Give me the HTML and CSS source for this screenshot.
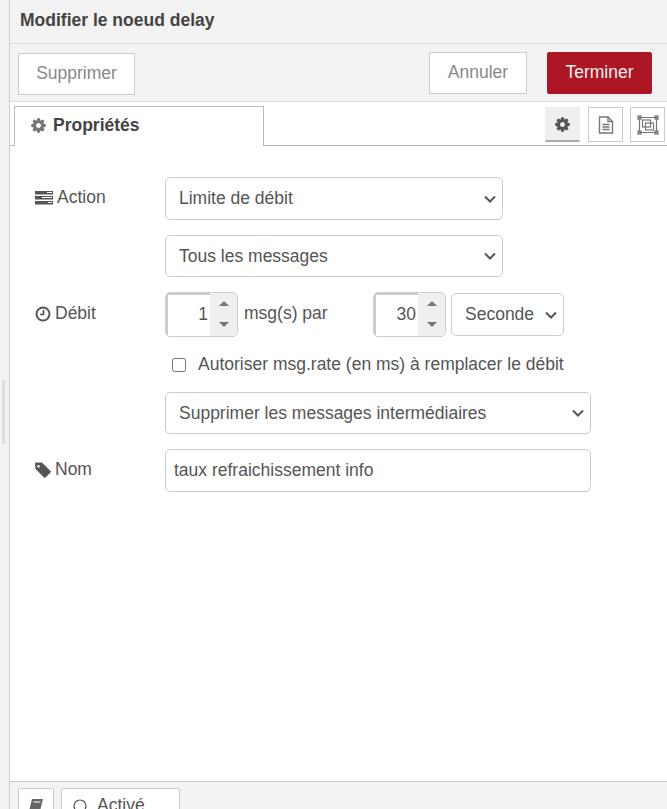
FILE: index.html
```html
<!DOCTYPE html>
<html lang="fr">
<head>
    <meta charset="UTF-8">
    <title>Modifier le noeud delay</title>
    <link rel="stylesheet" href="styles.css">
</head>
<body>

<div class="side-strip"><div class="grip"></div></div>

<div class="tray">
    <div class="tray-title">Modifier le noeud delay</div>

    <div class="tray-actions">
        <button class="btn btn-delete">Supprimer</button>
        <div class="spacer"></div>
        <button class="btn btn-cancel">Annuler</button>
        <button class="btn btn-done">Terminer</button>
    </div>

    <div class="tab-bar">
        <div class="tab">
            <svg class="icon-cog" viewBox="0 0 1792 1792"><path d="M1152 896q0-106-75-181t-181-75-181 75-75 181 75 181 181 75 181-75 75-181zm512-109v222q0 12-8 23t-20 13l-185 28q-19 54-39 91 35 50 107 138 10 12 10 25t-9 23q-27 37-99 108t-94 71q-12 0-26-9l-138-108q-44 23-91 38-16 136-29 186-7 28-36 28h-222q-14 0-24.5-8.5t-11.5-21.5l-28-184q-49-16-90-37l-141 107q-10 9-25 9-14 0-25-11-126-114-165-168-7-10-7-23 0-12 8-23 15-21 51-66.5t54-70.5q-27-50-41-99l-183-27q-13-2-21-12.5t-8-23.5v-222q0-12 8-23t19-13l186-28q14-46 39-92-40-57-107-138-10-12-10-24 0-10 9-23 26-36 98.5-107.5t94.5-71.5q13 0 26 10l138 107q44-23 91-38 16-136 29-186 7-28 36-28h222q14 0 24.5 8.5t11.5 21.5l28 184q49 16 90 37l142-107q9-9 24-9 13 0 25 10 129 119 165 170 7 8 7 22 0 12-8 23-15 21-51 66.5t-54 70.5q26 50 41 98l183 28q13 2 21 12.5t8 23.5z"/></svg>
            Propriétés
        </div>
        <div class="tab-buttons">
            <div class="tab-btn active">
                <svg class="icon-cog dark" viewBox="0 0 1792 1792"><path d="M1152 896q0-106-75-181t-181-75-181 75-75 181 75 181 181 75 181-75 75-181zm512-109v222q0 12-8 23t-20 13l-185 28q-19 54-39 91 35 50 107 138 10 12 10 25t-9 23q-27 37-99 108t-94 71q-12 0-26-9l-138-108q-44 23-91 38-16 136-29 186-7 28-36 28h-222q-14 0-24.5-8.5t-11.5-21.5l-28-184q-49-16-90-37l-141 107q-10 9-25 9-14 0-25-11-126-114-165-168-7-10-7-23 0-12 8-23 15-21 51-66.5t54-70.5q-27-50-41-99l-183-27q-13-2-21-12.5t-8-23.5v-222q0-12 8-23t19-13l186-28q14-46 39-92-40-57-107-138-10-12-10-24 0-10 9-23 26-36 98.5-107.5t94.5-71.5q13 0 26 10l138 107q44-23 91-38 16-136 29-186 7-28 36-28h222q14 0 24.5 8.5t11.5 21.5l28 184q49 16 90 37l142-107q9-9 24-9 13 0 25 10 129 119 165 170 7 8 7 22 0 12-8 23-15 21-51 66.5t-54 70.5q26 50 41 98l183 28q13 2 21 12.5t8 23.5z"/></svg>
            </div>
            <div class="tab-btn">
                <svg width="16" height="18" viewBox="0 0 16 18" fill="none" stroke="#777" stroke-width="1.4"><path d="M1.5 1h8.5l4.500 4.500v11.500h-13z"/><path d="M10 1v4.500h4.500"/><path d="M4.500 8.500h7M4.500 11h7M4.500 13.500h7"/></svg>
            </div>
            <div class="tab-btn">
                <svg width="22" height="20" viewBox="0 0 22 20" fill="none" stroke="#777" stroke-width="1.2"><path d="M3 2.500h16M3 17.500h16M2.500 3v14M19.500 3v14"/><rect x="5.500" y="5" width="8" height="7"/><rect x="8.500" y="8" width="8" height="7"/><rect x="1" y="1" width="3" height="3" fill="#999"/><rect x="18" y="1" width="3" height="3" fill="#999"/><rect x="1" y="16" width="3" height="3" fill="#999"/><rect x="18" y="16" width="3" height="3" fill="#999"/></svg>
            </div>
        </div>
    </div>

    <div class="form">
        <div class="form-row row-action">
            <label class="form-label">
                <svg width="18" height="14" viewBox="0 0 18 14"><path fill="#555" d="M0 0h18v3.600h-18zM0 5h18v3.600h-18zM0 10h18v3.600h-18z"/><path fill="#fff" d="M12 1h5v1h-5zM7 6h10v1h-10zM13 11h4v1h-4z"/></svg>
                Action
            </label>
            <select class="field field-wide"><option>Limite de débit</option></select>
        </div>
        <div class="form-row row-mode">
            <div class="form-label"></div>
            <select class="field field-wide field-short"><option>Tous les messages</option></select>
        </div>
        <div class="form-row row-rate">
            <label class="form-label">
                <svg width="16" height="16" viewBox="0 0 16 16" fill="none" stroke="#555"><circle cx="8" cy="8" r="6.500" stroke-width="2"/><path d="M8.500 4v4.500h-3.500" stroke-width="1.700"/></svg>
                Débit
            </label>
            <div class="spinner">
                <input class="spinner-input" type="text" value="1">
                <div class="spinner-arrows"><span class="arrow-up"></span><span class="arrow-down"></span></div>
            </div>
            <span class="rate-text">msg(s) par</span>
            <div class="spinner">
                <input class="spinner-input" type="text" value="30">
                <div class="spinner-arrows"><span class="arrow-up"></span><span class="arrow-down"></span></div>
            </div>
            <select class="field field-unit"><option>Seconde</option></select>
        </div>
        <div class="form-row row-check">
            <div class="form-label"></div>
            <input class="check" type="checkbox">
            <span>Autoriser msg.rate (en ms) à remplacer le débit</span>
        </div>
        <div class="form-row row-drop">
            <div class="form-label"></div>
            <select class="field field-long"><option>Supprimer les messages intermédiaires</option></select>
        </div>
        <div class="form-row row-name">
            <label class="form-label">
                <svg width="16" height="16" viewBox="0 0 16 16"><path fill="#555" d="M0 1.500q0-1 1-1h6l8.500 8.500q.7.700 0 1.400l-5 5q-.7.700-1.400 0l-8.600-8.500zM3.500 3a1.300 1.300 0 1 0 .01 0z" fill-rule="evenodd"/></svg>
                Nom
            </label>
            <input class="field field-long field-text" type="text" value="taux refraichissement info">
        </div>
    </div>

    <div class="tray-footer">
        <div class="foot-btn foot-book">
            <svg width="16" height="16" viewBox="0 0 16 16"><path fill="#666" d="M4 1h11l-3 12h-11zM5.500 3.500l-.3 1h7l.3-1z" fill-rule="evenodd"/></svg>
        </div>
        <div class="foot-btn foot-state">
            <svg width="14" height="14" viewBox="0 0 14 14" fill="none" stroke="#555" stroke-width="1.200"><circle cx="7" cy="7" r="6"/></svg>
            Activé
        </div>
    </div>
</div>

</body>
</html>
```

FILE: styles.css
```css
* {
    box-sizing: border-box;
}

body {
    margin: 0;
    height: 809px;
    overflow: hidden;
    display: flex;
    font-family: "Liberation Sans", Arial, sans-serif;
    font-size: 17.5px;
    color: #555;
    background: #fff;
}

.side-strip {
    width: 10px;
    flex: none;
    background: #f3f3f3;
    border-right: 1px solid #ccc;
    padding: 380px 4px 0 2px;
}

.grip {
    height: 64px;
    background: #ddd;
}

.tray {
    flex: 1;
    min-width: 0;
    display: flex;
    flex-direction: column;
}

.tray-title {
    height: 44px;
    padding: 10px 0 0 10px;
    background: #f3f3f3;
    border-bottom: 1px solid #ddd;
    font-weight: bold;
    color: #444;
}

.tray-actions {
    height: 58px;
    display: flex;
    align-items: flex-start;
    padding: 8px 15px 0 8px;
    background: #f3f3f3;
    border-bottom: 1px solid #ddd;
}

.spacer {
    flex: 1;
}

.btn {
    height: 42px;
    font: inherit;
    border: 1px solid #ccc;
    background: #fff;
    color: #888;
    padding: 0 0 2px;
}

.btn-delete {
    width: 117px;
    margin-top: 1px;
}

.btn-cancel {
    width: 98px;
}

.btn-done {
    width: 105px;
    margin-left: 20px;
    background: #ad1625;
    border-color: #ad1625;
    border-radius: 2px;
    color: #eee;
}

.tab-bar {
    height: 44px;
    display: flex;
    justify-content: space-between;
    padding-left: 4px;
    border-bottom: 1px solid #bbb;
}

.tab {
    width: 250px;
    height: 40px;
    margin-top: 4px;
    padding: 8px 0 0 15px;
    background: #fff;
    border: 1px solid #bbb;
    border-bottom: none;
    font-weight: bold;
    color: #444;
    display: flex;
    align-items: flex-start;
    gap: 6px;
}

.icon-cog {
    width: 17px;
    height: 17px;
    margin-top: 2px;
    fill: #777;
}

.icon-cog.dark {
    margin-top: 0;
    fill: #555;
}

.tab-buttons {
    display: flex;
    gap: 7px;
    padding: 5px 2px 0 0;
}

.tab-btn {
    width: 35px;
    height: 35px;
    border: 1px solid #ccc;
    display: flex;
    align-items: center;
    justify-content: center;
}

.tab-btn.active {
    margin-right: 1px;
    background: #efefef;
    border-color: #efefef;
    border-bottom: 2px solid #aaa;
}

.form {
    flex: 1;
    padding: 31px 0 0 25px;
}

.form-row {
    display: flex;
    align-items: center;
}

.form-label {
    width: 130px;
    flex: none;
    display: flex;
    align-items: center;
    gap: 4px;
    padding-bottom: 2px;
}

.field {
    height: 43px;
    font: inherit;
    color: #555;
    background: #fff;
    border: 1px solid #ccc;
    border-radius: 5px;
    padding: 0 8px;
}

select.field {
    appearance: none;
    padding: 0 24px 2px 13px;
    background-image: url("data:image/svg+xml,%3Csvg xmlns='http://www.w3.org/2000/svg' width='12' height='8' viewBox='0 0 12 8'%3E%3Cpath d='M1 1.500l5 5 5-5' fill='none' stroke='%23555' stroke-width='2'/%3E%3C/svg%3E");
    background-repeat: no-repeat;
    background-position: right 6px center;
}

.field-wide {
    width: 338px;
}

select.field-short {
    height: 42px;
    padding-bottom: 0;
}

.row-mode {
    margin-top: 15px;
}

.row-rate {
    margin-top: 15px;
}

.spinner {
    width: 73px;
    height: 45px;
    flex: none;
    display: flex;
    border: 1px solid #ccc;
    border-radius: 5px;
    overflow: hidden;
}

.spinner-input {
    width: 44px;
    border: none;
    border-top: 2px solid #ccc;
    border-left: 2px solid #ccc;
    font: inherit;
    color: #555;
    text-align: right;
    padding: 0 2px 2px 0;
    outline: none;
}

.spinner-arrows {
    flex: 1;
    background: #efefef;
    display: flex;
    flex-direction: column;
    align-items: center;
    justify-content: space-between;
    padding: 8px 0 9px;
}

.arrow-up {
    border: 5px solid transparent;
    border-top: none;
    border-bottom: 5px solid #777;
}

.arrow-down {
    border: 5px solid transparent;
    border-bottom: none;
    border-top: 5px solid #777;
}

.rate-text {
    width: 135px;
    flex: none;
    padding: 0 0 2px 6px;
}

.field-unit {
    width: 113px;
    margin-left: 5px;
}

.row-check {
    margin-top: 17px;
}

.check {
    width: 14px;
    height: 14px;
    margin: 0 12px 0 7px;
}

.row-drop {
    margin-top: 17px;
}

.field-long {
    width: 426px;
    height: 42px;
}

select.field-long {
    padding-bottom: 0;
}

.row-name {
    margin-top: 15px;
}

.field-text {
    height: 43px;
    outline: none;
}

.tray-footer {
    height: 28px;
    flex: none;
    display: flex;
    align-items: flex-start;
    gap: 7px;
    padding: 6px 0 0 8px;
    background: #f3f3f3;
    border-top: 1px solid #ccc;
    overflow: hidden;
}

.foot-btn {
    height: 36px;
    flex: none;
    background: #fff;
    border: 1px solid #ccc;
    border-radius: 2px;
    display: flex;
    align-items: flex-start;
    padding-top: 9px;
}

.foot-book {
    width: 36px;
    justify-content: center;
}

.foot-state {
    width: 119px;
    gap: 10px;
    padding: 6px 0 0 11px;
}

.foot-state svg {
    margin-top: 4px;
}
```
